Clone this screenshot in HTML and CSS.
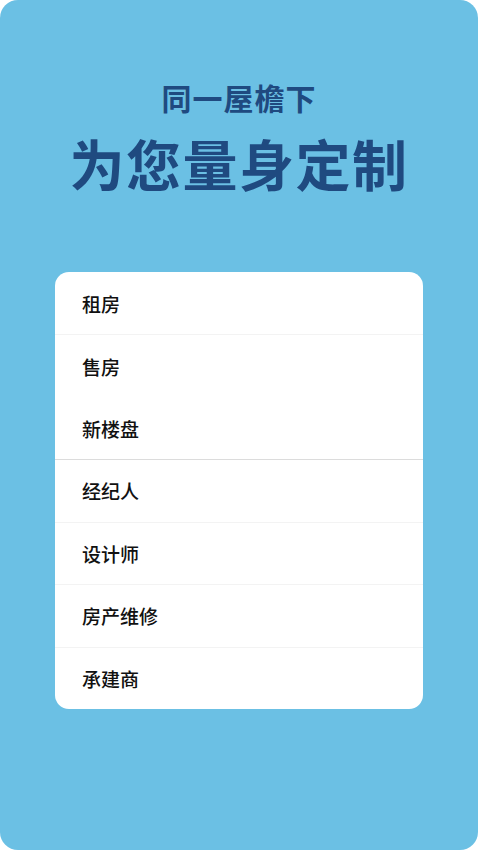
FILE: index.html
```html
<!DOCTYPE html>
<html lang="zh">
<head>
<meta charset="utf-8">
<link rel="stylesheet" href="styles.css">
</head>
<body>
<div class="screen">
  <header class="hero">
    <div class="sub">同一屋檐下</div>
    <div class="title">为您量身定制</div>
  </header>
  <ul class="menu">
    <li class="item">租房</li>
    <li class="item sep">售房</li>
    <li class="item">新楼盘</li>
    <li class="item sep-strong">经纪人</li>
    <li class="item sep">设计师</li>
    <li class="item sep">房产维修</li>
    <li class="item sep">承建商</li>
  </ul>
</div>
</body>
</html>
```
FILE: styles.css
```css
html, body {
  margin: 0;
  padding: 0;
  background: #ffffff;
}
body {
  font-family: "Noto Sans CJK SC", "Noto Sans", sans-serif;
}
.screen {
  width: 478px;
  height: 850px;
  background: #6bc0e4;
  border-radius: 18px;
  overflow: hidden;
  display: flex;
  flex-direction: column;
  align-items: center;
}
.hero {
  display: flex;
  flex-direction: column;
  align-items: center;
  padding-top: 77px;
  gap: 12px;
  color: #1f4a80;
}
.sub {
  font-size: 30px;
  line-height: 40px;
  font-weight: 600;
  letter-spacing: 1px;
}
.title {
  font-size: 55px;
  line-height: 66px;
  font-weight: 600;
  letter-spacing: 1.5px;
}
.menu {
  list-style: none;
  margin: 77px 0 0 0;
  padding: 0;
  width: 368px;
  height: 437px;
  background: #ffffff;
  border-radius: 14px;
  overflow: hidden;
  display: grid;
  grid-template-rows: repeat(7, 1fr);
}
.item {
  box-sizing: border-box;
  display: flex;
  align-items: center;
  padding-left: 27px;
  font-size: 19px;
  font-weight: 500;
  color: #111111;
  border-top: 1px solid transparent;
}
.item.sep {
  border-top-color: #f3f3f3;
}
.item.sep-strong {
  border-top-color: #dcdcdc;
}
```
